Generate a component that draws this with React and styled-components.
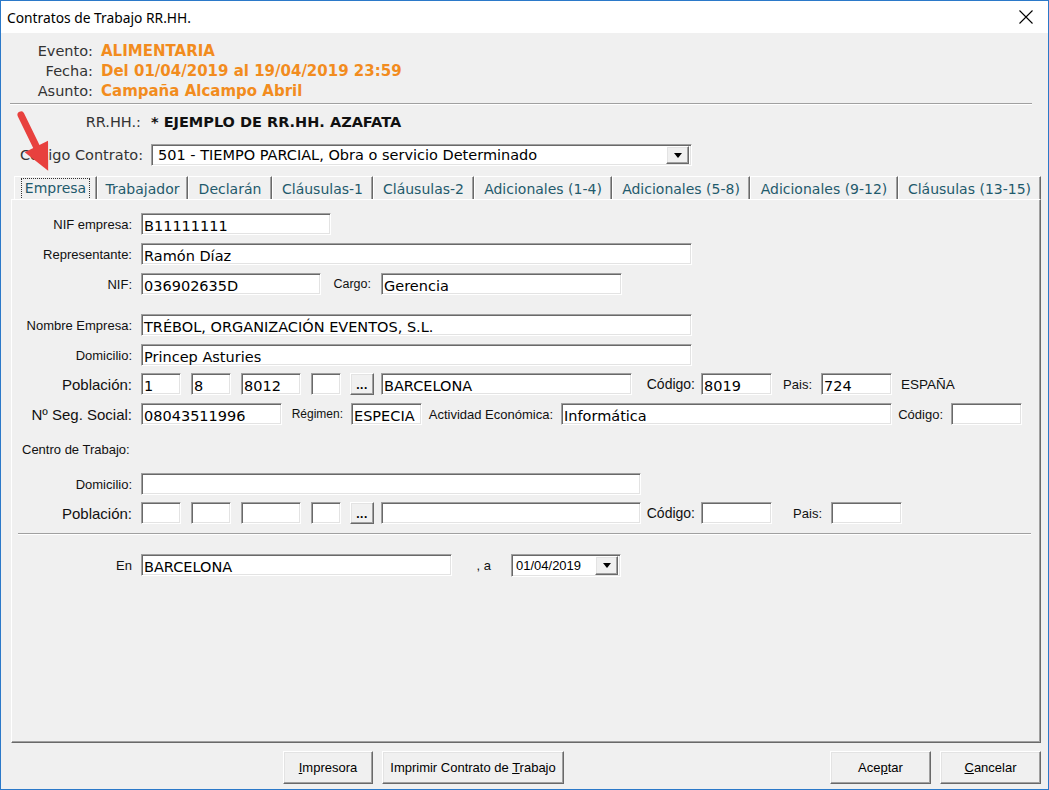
import React from 'react';
import styled, { createGlobalStyle } from 'styled-components';

const V = '"DejaVu Sans", Verdana, sans-serif';
const A = '"Liberation Sans", Arial, sans-serif';

const Global = createGlobalStyle`
  html, body { margin: 0; padding: 0; background: #fff; }
  * { box-sizing: border-box; }
`;

const Window = styled.div`
  position: relative;
  width: 1049px;
  height: 790px;
  border: 1px solid #2b79c9;
  background: #f0f0f0;
  display: flex;
  flex-direction: column;
  overflow: hidden;
`;

const TitleBar = styled.div`
  height: 32px;
  flex: none;
  background: #fff;
  display: flex;
  align-items: center;
  justify-content: space-between;
  padding: 0 15px 0 6px;
  font-family: "Noto Sans", "Segoe UI", sans-serif;
  font-size: 13.8px;
  color: #000;
`;

const Body = styled.div`
  flex: 1;
  display: flex;
  flex-direction: column;
`;

const InfoGrid = styled.div`
  display: grid;
  grid-template-columns: 92px auto;
  column-gap: 8px;
  padding-top: 8px;
  font-family: ${V};
  font-size: 14.5px;
  line-height: 20px;
`;

const InfoLabel = styled.div`
  text-align: right;
  color: #333;
`;

const InfoValue = styled.div`
  color: #f28c1e;
  font-weight: bold;
  font-size: 15px;
`;

const Rule = styled.div`
  height: 2px;
  border-top: 1px solid #a0a0a0;
  border-bottom: 1px solid #fff;
  margin: ${p => p.$mt}px 0 0 ${p => p.$ml}px;
  width: ${p => p.$w}px;
  flex: none;
`;

const HeadRow = styled.div`
  display: flex;
  align-items: center;
  height: ${p => p.$h}px;
  margin-top: ${p => p.$mt}px;
  font-family: ${V};
  font-size: 14.5px;
  flex: none;
`;

const HeadLabel = styled.div`
  width: ${p => p.$w}px;
  padding-left: ${p => p.$pl || 0}px;
  padding-right: ${p => p.$pr || 0}px;
  text-align: ${p => p.$align || 'right'};
  color: #333;
  white-space: nowrap;
  flex: none;
`;

const HeadValue = styled.div`
  font-weight: bold;
  color: #111;
`;

const sunken = `
  background: #fff;
  border-top: 1px solid #a0a0a0;
  border-left: 1px solid #a0a0a0;
  border-right: 1px solid #fff;
  border-bottom: 1px solid #fff;
  box-shadow: inset 1px 1px 0 #696969, inset -1px -1px 0 #e3e3e3;
`;

const raised = `
  background: #f0f0f0;
  border-top: 1px solid #fff;
  border-left: 1px solid #fff;
  border-right: 1px solid #696969;
  border-bottom: 1px solid #696969;
  box-shadow: inset -1px -1px 0 #a0a0a0, inset 1px 1px 0 #e3e3e3;
`;

const Combo = styled.div`
  ${sunken}
  width: ${p => p.$w}px;
  height: ${p => p.$h || 22}px;
  display: flex;
  align-items: center;
  justify-content: space-between;
  padding: 0 2px 0 ${p => p.$pl || 6}px;
  font-family: ${p => (p.$small ? A : V)};
  font-size: ${p => (p.$small ? '13px' : '14.5px')};
  color: #000;
  white-space: nowrap;
  flex: none;
`;

const ComboBtn = styled.div`
  ${raised}
  width: 23px;
  height: ${p => p.$h || 18}px;
  display: flex;
  align-items: center;
  justify-content: center;
  &::after {
    content: '';
    border-left: 4px solid transparent;
    border-right: 4px solid transparent;
    border-top: 5px solid #000;
  }
`;

const TabStrip = styled.div`
  display: flex;
  margin: 10px 0 0 13px;
  height: 23px;
  flex: none;
`;

const Tab = styled.div`
  width: ${p => p.$w}px;
  height: 23px;
  display: flex;
  align-items: center;
  justify-content: center;
  border-top: 1px solid #fff;
  border-left: 1px solid #fff;
  border-right: 1px solid #696969;
  box-shadow: inset -1px 0 0 #a0a0a0;
  font-family: ${V};
  font-size: 14px;
  color: #1f5a6c;
  white-space: nowrap;
  padding-top: 2px;
`;

const FocusText = styled.span`
  border: 1px dotted #333;
  padding: 1px 3px 3px;
`;

const Panel = styled.div`
  margin-left: 10px;
  width: 1030px;
  height: 544px;
  flex: none;
  border-top: 1px solid #fff;
  border-left: 1px solid #fff;
  border-right: 1px solid #696969;
  border-bottom: 1px solid #696969;
  box-shadow: inset -1px -1px 0 #a0a0a0;
  display: flex;
  flex-direction: column;
  padding-top: 13px;
`;

const Row = styled.div`
  display: flex;
  align-items: center;
  height: 22px;
  margin-top: ${p => p.$mt || 0}px;
  flex: none;
`;

const RowLabel = styled.div`
  width: 129px;
  padding-right: 9px;
  text-align: right;
  font-family: ${A};
  font-size: ${p => p.$fs || 13}px;
  color: #111;
  white-space: nowrap;
  flex: none;
`;

const Lbl = styled.div`
  width: ${p => p.$w}px;
  padding-right: ${p => p.$pr ?? 8}px;
  text-align: right;
  font-family: ${A};
  font-size: ${p => p.$fs || 13}px;
  color: #111;
  white-space: nowrap;
  flex: none;
`;

const Plain = styled.div`
  margin-left: ${p => p.$ml || 0}px;
  font-family: ${A};
  font-size: 13.5px;
  color: #111;
  white-space: nowrap;
`;

const SectionLabel = styled.div`
  margin: ${p => p.$mt}px 0 0 10px;
  height: 16px;
  line-height: 16px;
  font-family: ${A};
  font-size: 13px;
  color: #111;
  flex: none;
`;

const Field = styled.div`
  ${sunken}
  width: ${p => p.$w}px;
  height: 22px;
  margin-left: ${p => p.$ml || 0}px;
  padding: 3px 0 0 2px;
  line-height: 18px;
  font-family: ${V};
  font-size: 14.5px;
  color: #000;
  white-space: nowrap;
  overflow: hidden;
  flex: none;
`;

const DotsBtn = styled.div`
  ${raised}
  width: 24px;
  height: 22px;
  margin-left: ${p => p.$ml || 0}px;
  display: flex;
  align-items: flex-end;
  justify-content: center;
  padding-bottom: 4px;
  font-family: ${A};
  font-weight: bold;
  font-size: 12px;
  line-height: 10px;
  letter-spacing: 0.5px;
  flex: none;
`;

const ButtonBar = styled.div`
  display: flex;
  justify-content: space-between;
  margin-top: 8px;
  padding: 0 7px 0 282px;
  flex: none;
`;

const BtnGroup = styled.div`
  display: flex;
  gap: 9px;
`;

const Btn = styled.button`
  ${raised}
  width: ${p => p.$w}px;
  height: 33px;
  padding: 0;
  font-family: ${A};
  font-size: 13px;
  color: #000;
  cursor: default;
`;

const ArrowOverlay = styled.svg`
  position: absolute;
  left: 0;
  top: 100px;
  pointer-events: none;
`;

const CloseIcon = () => (
  <svg width="14" height="14" viewBox="0 0 14 14">
    <path d="M0.5 0.5 L13.5 13.5 M13.5 0.5 L0.5 13.5" stroke="#000" strokeWidth="1.1" fill="none" />
  </svg>
);

const tabs = [
  ['Empresa', 83],
  ['Trabajador', 91],
  ['Declarán', 84],
  ['Cláusulas-1', 101],
  ['Cláusulas-2', 101],
  ['Adicionales (1-4)', 138],
  ['Adicionales (5-8)', 138],
  ['Adicionales (9-12)', 148],
  ['Cláusulas (13-15)', 143],
];

export default function App() {
  return (
    <>
      <Global />
      <Window>
        <TitleBar>
          <span>Contratos de Trabajo RR.HH.</span>
          <CloseIcon />
        </TitleBar>
        <Body>
          <InfoGrid>
            <InfoLabel>Evento:</InfoLabel>
            <InfoValue>ALIMENTARIA</InfoValue>
            <InfoLabel>Fecha:</InfoLabel>
            <InfoValue>Del 01/04/2019 al 19/04/2019 23:59</InfoValue>
            <InfoLabel>Asunto:</InfoLabel>
            <InfoValue>Campaña Alcampo Abril</InfoValue>
          </InfoGrid>
          <Rule $mt={2} $ml={9} $w={1022} />
          <HeadRow $h={20} $mt={7}>
            <HeadLabel $w={150} $pr={10}>RR.HH.:</HeadLabel>
            <HeadValue>* EJEMPLO DE RR.HH. AZAFATA</HeadValue>
          </HeadRow>
          <HeadRow $h={22} $mt={12}>
            <HeadLabel $w={150} $pl={19} $align="left">Código Contrato:</HeadLabel>
            <Combo $w={541}>
              <span>501 - TIEMPO PARCIAL, Obra o servicio Determinado</span>
              <ComboBtn />
            </Combo>
          </HeadRow>
          <TabStrip>
            {tabs.map(([t, w], i) => (
              <Tab key={t} $w={w}>
                {i === 0 ? <FocusText>Empresa</FocusText> : t}
              </Tab>
            ))}
          </TabStrip>
          <Panel>
            <Row>
              <RowLabel>NIF empresa:</RowLabel>
              <Field $w={190}>B11111111</Field>
            </Row>
            <Row $mt={8}>
              <RowLabel>Representante:</RowLabel>
              <Field $w={551}>Ramón Díaz</Field>
            </Row>
            <Row $mt={8}>
              <RowLabel>NIF:</RowLabel>
              <Field $w={180}>036902635D</Field>
              <Lbl $w={60} $pr={10} $fs={12.5}>Cargo:</Lbl>
              <Field $w={241}>Gerencia</Field>
            </Row>
            <Row $mt={19}>
              <RowLabel>Nombre Empresa:</RowLabel>
              <Field $w={551}>TRÉBOL, ORGANIZACIÓN EVENTOS, S.L.</Field>
            </Row>
            <Row $mt={8}>
              <RowLabel>Domicilio:</RowLabel>
              <Field $w={551}>Princep Asturies</Field>
            </Row>
            <Row $mt={7}>
              <RowLabel $fs={15}>Población:</RowLabel>
              <Field $w={40}>1</Field>
              <Field $w={40} $ml={10}>8</Field>
              <Field $w={60} $ml={10}>8012</Field>
              <Field $w={30} $ml={10} />
              <DotsBtn $ml={9}>...</DotsBtn>
              <Field $w={251} $ml={7}>BARCELONA</Field>
              <Lbl $w={69} $pr={6} $fs={14}>Código:</Lbl>
              <Field $w={71}>8019</Field>
              <Lbl $w={49} $pr={9}>Pais:</Lbl>
              <Field $w={71}>724</Field>
              <Plain $ml={9}>ESPAÑA</Plain>
            </Row>
            <Row $mt={8}>
              <RowLabel $fs={15}>Nº Seg. Social:</RowLabel>
              <Field $w={141}>08043511996</Field>
              <Lbl $w={69} $pr={8} $fs={12}>Régimen:</Lbl>
              <Field $w={71}>ESPECIA</Field>
              <Lbl $w={139} $pr={8}>Actividad Económica:</Lbl>
              <Field $w={331}>Informática</Field>
              <Lbl $w={59} $pr={8}>Código:</Lbl>
              <Field $w={71} />
            </Row>
            <SectionLabel $mt={17}>Centro de Trabajo:</SectionLabel>
            <Row $mt={15}>
              <RowLabel>Domicilio:</RowLabel>
              <Field $w={500} />
            </Row>
            <Row $mt={7}>
              <RowLabel $fs={15}>Población:</RowLabel>
              <Field $w={40} />
              <Field $w={40} $ml={10} />
              <Field $w={60} $ml={10} />
              <Field $w={30} $ml={10} />
              <DotsBtn $ml={9}>...</DotsBtn>
              <Field $w={260} $ml={7} />
              <Lbl $w={60} $pr={6} $fs={14}>Código:</Lbl>
              <Field $w={71} />
              <Lbl $w={59} $pr={9}>Pais:</Lbl>
              <Field $w={71} />
            </Row>
            <Rule $mt={9} $ml={6} $w={1013} />
            <Row $mt={19}>
              <RowLabel>En</RowLabel>
              <Field $w={311}>BARCELONA</Field>
              <Lbl $w={59} $pr={20}>, a</Lbl>
              <Combo $w={110} $h={23} $pl={4} $small>
                <span>01/04/2019</span>
                <ComboBtn $h={19} />
              </Combo>
            </Row>
          </Panel>
          <ButtonBar>
            <BtnGroup>
              <Btn $w={90}><u>I</u>mpresora</Btn>
              <Btn $w={182}>Imprimir Contrato de <u>T</u>rabajo</Btn>
            </BtnGroup>
            <BtnGroup>
              <Btn $w={101}>Ace<u>p</u>tar</Btn>
              <Btn $w={101}><u>C</u>ancelar</Btn>
            </BtnGroup>
          </ButtonBar>
        </Body>
        <ArrowOverlay width="80" height="90" viewBox="0 0 80 90">
          <g transform="translate(20 14) rotate(-26)">
            <line x1="0" y1="0" x2="0" y2="40" stroke="#e8413e" strokeWidth="7" strokeLinecap="round" />
            <polygon points="-13,35 13,35 0,62" fill="#e8413e" />
          </g>
        </ArrowOverlay>
      </Window>
    </>
  );
}
